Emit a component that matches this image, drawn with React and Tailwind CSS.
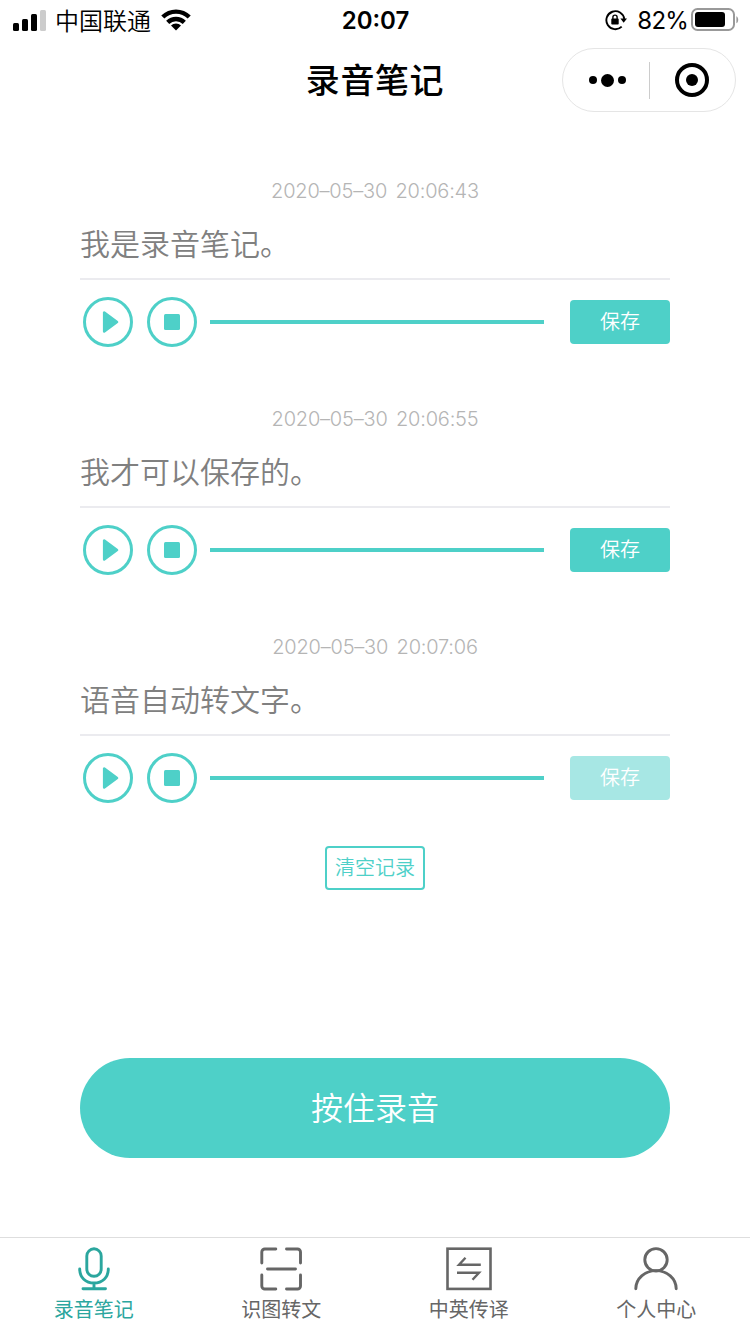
import { useState } from 'react';

const notes = [
  { id: 1, time: '2020–05–30 20:06:43', text: '我是录音笔记。', saved: false },
  { id: 2, time: '2020–05–30 20:06:55', text: '我才可以保存的。', saved: false },
  { id: 3, time: '2020–05–30 20:07:06', text: '语音自动转文字。', saved: true },
];

const StatusBar = () => (
  <div className="flex h-10 items-center justify-between pl-[13px] pr-[11px] text-black">
    <div className="flex w-[240px] items-center">
      <svg width="33" height="21" viewBox="0 0 33 21">
        <rect x="0" y="13" width="6" height="8" rx="1.5" />
        <rect x="9" y="9" width="6" height="12" rx="1.5" />
        <rect x="18" y="4" width="6" height="17" rx="1.5" />
        <rect x="27" y="0" width="6" height="21" rx="1.5" fill="#cccccc" />
      </svg>
      <span className="ml-[9px] text-[24px] font-[350] leading-10">中国联通</span>
      <svg className="ml-[10px]" width="30" height="22" viewBox="0 0 30 22">
        <g fill="none" stroke="#000" strokeWidth="4.4">
          <path d="M1.8 8a18.800 18.800 0 0 1 26.400 0" />
          <path d="M6.700 13.400a11.800 11.800 0 0 1 16.600 0" />
        </g>
        <path d="M15 21.500l-5-4.900a7 7 0 0 1 10 0z" />
      </svg>
    </div>
    <span className="pt-[2px] pr-[1px] font-['Inter'] text-[24px] font-semibold leading-[38px]">20:07</span>
    <div className="flex w-[240px] items-center justify-end">
      <svg width="22" height="22" viewBox="0 0 22 22">
        <path d="M16.7 17.6a9 9 0 1 1 2.6-7.6" fill="none" stroke="#000" strokeWidth="1.9" />
        <path d="M15.4 9.5h6.6l-3.3 4.2z" />
        <rect x="6.3" y="9.6" width="7.4" height="6" rx="0.8" />
        <path d="M7.9 10V8.2a2.1 2.1 0 0 1 4.2 0V10" fill="none" stroke="#000" strokeWidth="1.4" />
      </svg>
      <span className="ml-[10px] pt-[2px] font-['Inter'] text-[24px] leading-[38px] tracking-[-0.8px]">82%</span>
      <svg className="ml-[3px]" width="48" height="24" viewBox="0 0 48 24">
        <rect x="1" y="1" width="42" height="21" rx="5.5" fill="none" stroke="#999" strokeWidth="2" />
        <rect x="4" y="4" width="30" height="15" rx="3" />
        <path d="M45.4 8.2c2.4 1 2.4 6 0 7z" fill="#999" />
      </svg>
    </div>
  </div>
);

const NavBar = () => (
  <div className="grid h-20 grid-cols-[1fr_auto_1fr] items-center pr-[14px] pl-[14px]">
    <span />
    <h1 className="pb-[2px] text-[34px] font-medium leading-[46px] tracking-[0.6px] text-black">录音笔记</h1>
    <div className="flex h-16 w-[174px] items-center justify-self-end rounded-full border border-[#e5e5e5]">
      <div className="flex w-[86px] items-center gap-1 pl-[26px]">
        <span className="size-2 rounded-full bg-black" />
        <span className="size-[13px] rounded-full bg-black" />
        <span className="size-2 rounded-full bg-black" />
      </div>
      <div className="h-[37px] w-px bg-[#cccccc]" />
      <div className="flex flex-1 items-center pl-[25px]">
        <span className="flex size-[34px] items-center justify-center rounded-full border-4 border-black">
          <span className="size-3 rounded-full bg-black" />
        </span>
      </div>
    </div>
  </div>
);

const Note = ({ note, onSave }) => (
  <section className="mb-[57px]">
    <p className="text-center font-['Inter'] text-[20px] leading-[30px] font-[350] tracking-[-0.2px] [word-spacing:3px] text-[#b5b5b5]">
      {note.time}
    </p>
    <p className="h-[72px] pt-[14px] text-[30px] font-[350] leading-[45px] text-[#808080]">{note.text}</p>
    <div className="h-[2px] bg-[#ebebef]" />
    <div className="mt-[17px] flex h-[50px] items-center pl-[3px]">
      <button>
        <svg width="50" height="50" viewBox="0 0 50 50">
          <circle cx="25" cy="25" r="23.5" fill="none" stroke="#4ed0c8" strokeWidth="3" />
          <path d="M21.2 15.500v19l12.800-9.500z" fill="#4ed0c8" stroke="#4ed0c8" strokeWidth="2.6" strokeLinejoin="round" />
        </svg>
      </button>
      <button className="ml-[14px]">
        <svg width="50" height="50" viewBox="0 0 50 50">
          <circle cx="25" cy="25" r="23.5" fill="none" stroke="#4ed0c8" strokeWidth="3" />
          <rect x="17" y="17" width="16" height="16" rx="1.5" fill="#4ed0c8" />
        </svg>
      </button>
      <div className="ml-[13px] h-1 w-[334px] bg-[#4ed0c8]" />
      <button
        onClick={() => onSave(note.id)}
        className={
          note.saved
            ? 'ml-auto h-11 w-[100px] rounded-[4px] bg-[#a7e7e4] pb-[2px] text-[20px] font-[350] text-white'
            : 'ml-auto h-11 w-[100px] rounded-[4px] bg-[#4ed0c8] pb-[2px] text-[20px] font-[350] text-white'
        }
      >
        保存
      </button>
    </div>
  </section>
);

const tabs = [
  {
    label: '录音笔记',
    icon: (
      <>
        <rect x="16.800" y="2.800" width="14.4" height="27.5" rx="7.2" />
        <path d="M9.700 23c0 8.500 6 14 14.300 14s14.300-5.500 14.300-14M24 37V42.500M13 42.800h22.500" />
      </>
    ),
  },
  {
    label: '识图转文',
    icon: (
      <path d="M4.800 17V6a3 3 0 0 1 3-3h11M29.500 3h11a3 3 0 0 1 3 3v11M43.500 29v11a3 3 0 0 1-3 3h-11M18.800 43h-11a3 3 0 0 1-3-3v-11M10.500 23h28" />
    ),
  },
  {
    label: '中英传译',
    icon: (
      <>
        <rect x="2.500" y="2.700" width="43" height="40.200" strokeLinejoin="miter" strokeWidth="2.6" />
        <path d="M35.800 18.800H14l6.500-7M12 26.800h22l-6.500 7" strokeWidth="2.4" strokeLinecap="butt" strokeLinejoin="miter" />
      </>
    ),
  },
  {
    label: '个人中心',
    icon: (
      <>
        <circle cx="24" cy="13.800" r="11.200" />
        <path d="M3.800 42.800a20.200 18.200 0 0 1 40.400 0" />
      </>
    ),
  },
];

const TabBar = ({ active, onChange }) => (
  <nav className="grid h-[97px] grid-cols-4 border-t border-[#dedede] bg-white">
    {tabs.map((tab, i) => (
      <button
        key={tab.label}
        onClick={() => onChange(i)}
        className={
          i === active
            ? 'flex flex-col items-center pt-2 text-[#2ba69e]'
            : 'flex flex-col items-center pt-2 text-[#666666]'
        }
      >
        <svg
          width="48"
          height="46"
          viewBox="0 0 48 46"
          fill="none"
          stroke="currentColor"
          strokeWidth="2.9"
          strokeLinecap="round"
          strokeLinejoin="round"
        >
          {tab.icon}
        </svg>
        <span className="mt-[3px] text-[20px] leading-7">{tab.label}</span>
      </button>
    ))}
  </nav>
);

const App = () => {
  const [items, setItems] = useState(notes);
  const [activeTab, setActiveTab] = useState(0);

  const saveNote = (id) => setItems(items.map((n) => (n.id === id ? { ...n, saved: true } : n)));

  return (
    <div className="flex h-[1334px] w-[750px] flex-col overflow-hidden bg-white font-['Noto_Sans_CJK_SC',sans-serif]">
      <StatusBar />
      <NavBar />
      <main className="flex flex-1 flex-col px-20 pt-14">
        {items.map((note) => (
          <Note key={note.id} note={note} onSave={saveNote} />
        ))}
        <button
          onClick={() => setItems([])}
          className="-mt-[14px] h-11 w-[100px] self-center rounded-[4px] border-2 border-[#4ed0c8] pb-[2px] text-[20px] font-[350] leading-[36px] whitespace-nowrap text-[#4ed0c8]"
        >
          清空记录
        </button>
        <button className="mt-auto mb-[79px] h-[100px] rounded-full bg-[#4ed0c8] pb-[5px] text-[32px] font-[350] text-white">
          按住录音
        </button>
      </main>
      <TabBar active={activeTab} onChange={setActiveTab} />
    </div>
  );
};

export default App;
